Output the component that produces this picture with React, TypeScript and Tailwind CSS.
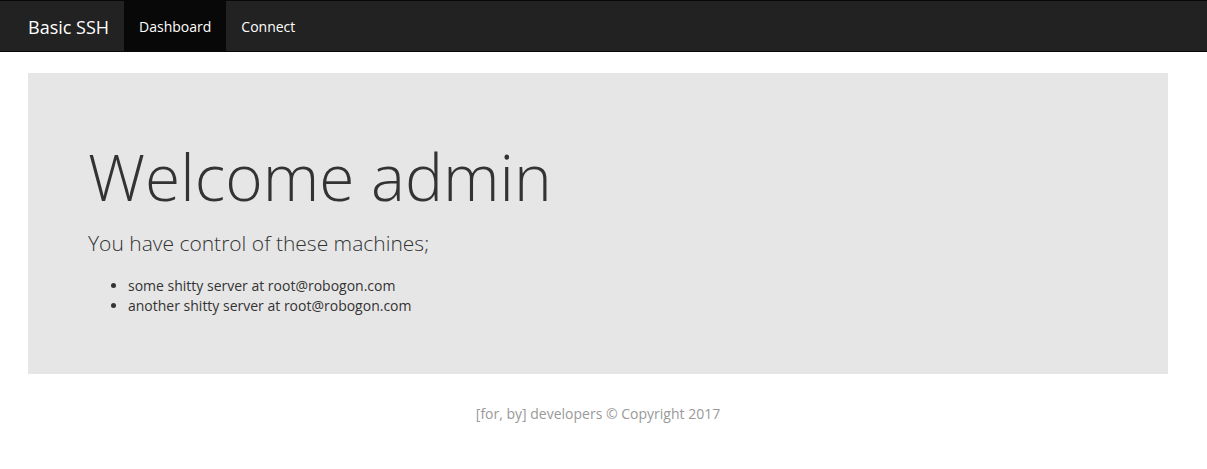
export default function App() {
  return (
    <div className="min-h-[469px] bg-white text-[#333] text-[14px] leading-[20px]" style={{ fontFamily: '"Open Sans", "Noto Sans", sans-serif' }}>
      <nav className="h-[52px] bg-[#222] border-y border-[#080808]">
        <div className="ml-[13px] w-[1170px] flex h-[50px]">
          <span className="px-[15px] pt-[2px] h-[50px] flex items-center text-[18px] text-white">Basic SSH</span>
          <a className="px-[15px] pt-[2px] h-[50px] flex items-center bg-[#080808] text-white">Dashboard</a>
          <a className="px-[15px] pt-[2px] h-[50px] flex items-center text-white">Connect</a>
        </div>
      </nav>

      <div className="ml-[28px] w-[1140px] mt-[21px] bg-[#e6e6e6] px-[60px] pt-[48px] pb-[48px]">
        <h1 className="mt-[21px] mb-[17px] text-[64px] leading-[69px] font-light">Welcome admin</h1>
        <p className="text-[21px] leading-[30px] font-light mb-[18px]">You have control of these machines;</p>
        <ul className="list-disc pl-[40px] mb-[10px]">
          <li>some shitty server at root@robogon.com</li>
          <li>another shitty server at root@robogon.com</li>
        </ul>
      </div>

      <footer className="ml-[13px] w-[1170px] text-center text-[#999] pt-[30px]">
        [for, by] developers © Copyright 2017
      </footer>
    </div>
  );
}
